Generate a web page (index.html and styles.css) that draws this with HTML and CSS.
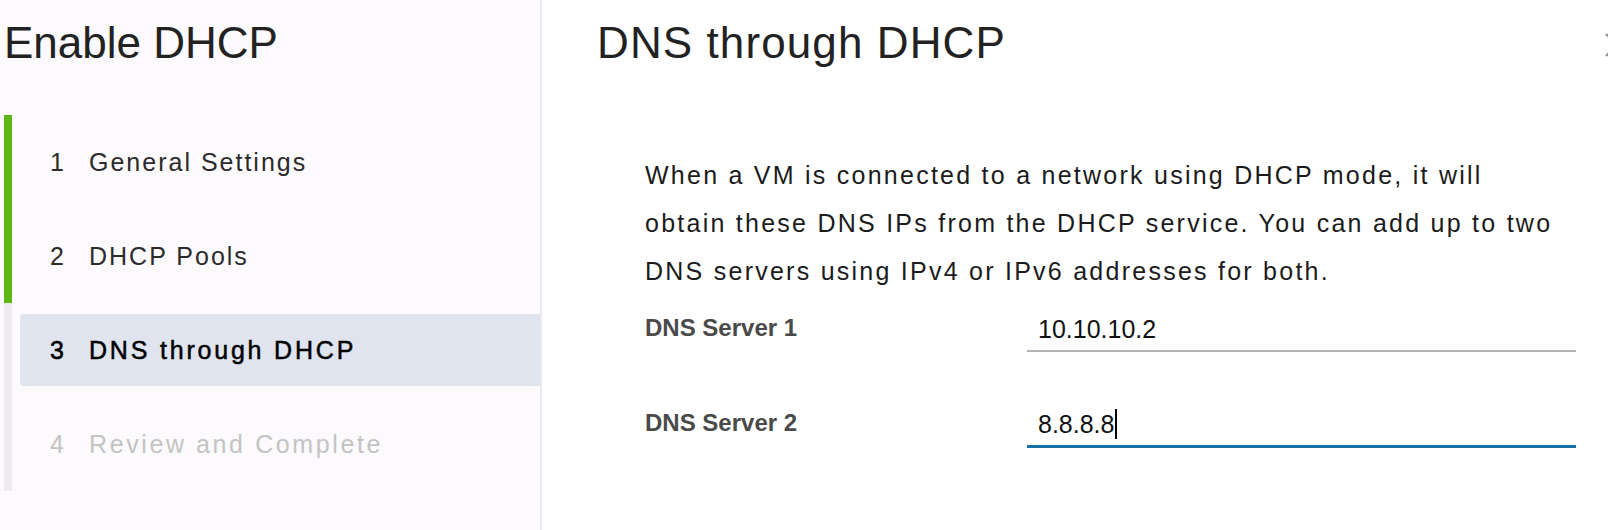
FILE: index.html
```html
<!DOCTYPE html>
<html>
<head>
  <meta charset="UTF-8">
  <title>Enable DHCP</title>
  <link rel="stylesheet" href="styles.css">
</head>
<body>
  <div class="wizard">
    <aside class="steps">
      <h2 class="wizard-title">Enable DHCP</h2>
      <ul class="step-list">
        <li class="step done"><a class="step-link"><span class="num">1</span>General Settings</a></li>
        <li class="step done"><a class="step-link"><span class="num">2</span>DHCP Pools</a></li>
        <li class="step current"><a class="step-link"><span class="num">3</span>DNS through DHCP</a></li>
        <li class="step todo"><a class="step-link"><span class="num">4</span>Review and Complete</a></li>
      </ul>
    </aside>

    <main class="page">
      <h2 class="page-title">DNS through DHCP</h2>
      <p class="intro">When a VM is connected to a network using DHCP mode, it will<br>obtain these DNS IPs from the DHCP service. You can add up to two<br>DNS servers using IPv4 or IPv6 addresses for both.</p>

      <div class="dns-form">
        <label class="row-label">DNS Server 1</label>
        <div class="field">10.10.10.2</div>
        <label class="row-label">DNS Server 2</label>
        <div class="field focused">8.8.8.8<span class="caret"></span></div>
      </div>
    </main>

    <!-- close icon, mostly cut off by the window edge -->
    <button class="close" title="Close">
      <svg width="24" height="24" viewBox="0 0 24 24">
        <path d="M1 1 L23 23 M1 23 L23 1" stroke="#8a8a8a" stroke-width="2" fill="none"/>
      </svg>
    </button>
  </div>
</body>
</html>
```

FILE: styles.css
```css
/* wizard layout */
body {
  margin: 0;
  overflow: hidden;
  font-family: "Liberation Sans", Arial, sans-serif;
  background: #fff;
}

.wizard {
  display: flex;
  height: 100vh;
}

.steps {
  width: 536px;
  padding-left: 4px;
  background: #fcfafd;
  border-right: 2px solid #ebe9ee;
}

.wizard-title,
.page-title {
  margin: 17px 0 0;
  font-size: 44px;
  line-height: 52px;
  font-weight: normal;
  color: #222;
}

.page-title {
  letter-spacing: 1.1px;
}

.step-list {
  list-style: none;
  margin: 46px 0 0;
  padding: 0;
}

.step {
  height: 94px;
  box-sizing: border-box;
  padding: 11px 0 11px 8px;
  border-left: 8px solid #eeebf0;
}

.step.done {
  border-left-color: #5eb716;
}

.step-link {
  display: flex;
  align-items: center;
  height: 72px;
  padding-left: 30px;
  border-radius: 3px 0 0 3px;
  font-size: 25px;
  letter-spacing: 2px;
  color: #2b2b2b;
}

.step-link .num {
  display: inline-block;
  width: 39px;
}

.step.current .step-link {
  background: #dfe4ee;
  color: #000;
  letter-spacing: 2.8px;
  -webkit-text-stroke: 0.5px #000;
}

.step.todo .step-link {
  color: #c3c3c3;
  letter-spacing: 2.6px;
}

/* right hand page */
.page {
  flex: 1;
  padding-left: 55px;
}

.intro {
  margin: 82px 0 0 48px;
  font-size: 25px;
  line-height: 48px;
  letter-spacing: 2.25px;
  color: #1b1b1b;
}

.dns-form {
  display: grid;
  grid-template-columns: 382px 549px;
  row-gap: 51px;
  margin: 13px 0 0 48px;
}

.row-label {
  align-self: start;
  font-size: 24px;
  line-height: 40px;
  font-weight: bold;
  letter-spacing: 0;
  color: #4a4a4a;
}

.field {
  height: 44px;
  box-sizing: border-box;
  padding-left: 11px;
  line-height: 42px;
  font-size: 25px;
  color: #111;
  border-bottom: 2px solid #b3b3b3;
}

.field.focused {
  height: 45px;
  border-bottom: 3px solid #1572a5;
}

.caret {
  display: inline-block;
  width: 2px;
  height: 30px;
  margin-left: 1px;
  vertical-align: -6px;
  background: #000;
}

.close {
  position: absolute;
  left: 1605px;
  top: 33px;
  padding: 0;
  border: none;
  background: none;
}

.close svg {
  display: block;
}
```
